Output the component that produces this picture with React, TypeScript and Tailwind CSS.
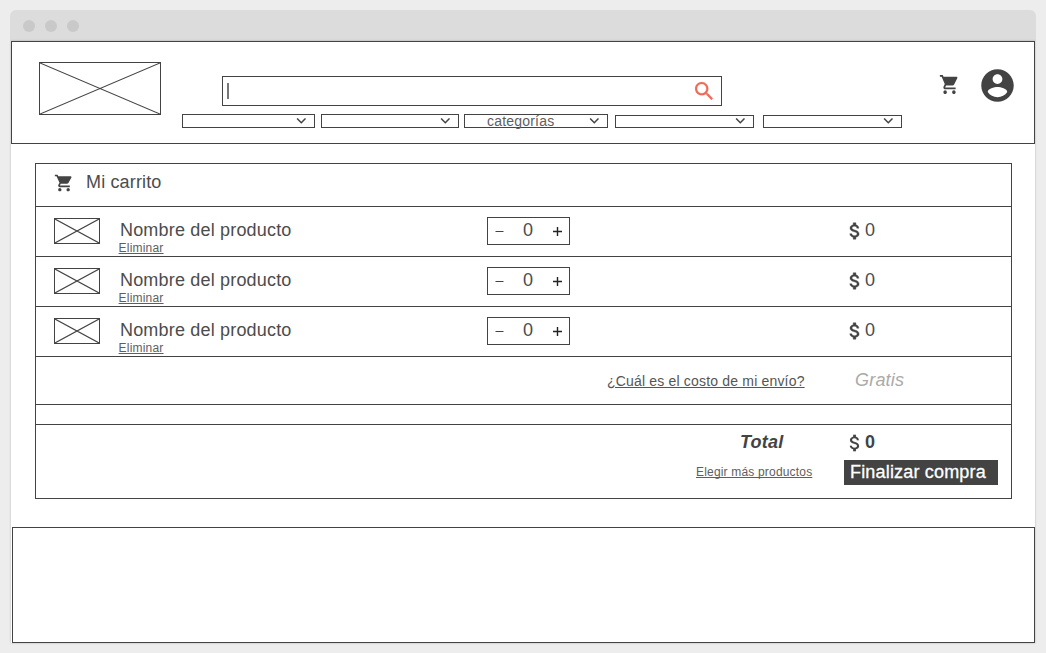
import React from "react";

type SelectProps = { className: string; label?: string };

function Crossed({ className }: { className: string }) {
  return (
    <div className={`shrink-0 border border-[#434343] ${className}`}>
      <svg className="block h-full w-full" viewBox="0 0 100 100" preserveAspectRatio="none">
        <path d="M0 0L100 100M100 0L0 100" stroke="#434343" strokeWidth="1.1" fill="none" vectorEffect="non-scaling-stroke" />
      </svg>
    </div>
  );
}

function Cart({ className }: { className: string }) {
  return (
    <svg className={`shrink-0 ${className}`} viewBox="0 0 24 24" preserveAspectRatio="none" fill="#434343">
      <path d="M7 18c-1.100 0-1.990.9-1.990 2S5.900 22 7 22s2-.9 2-2-.9-2-2-2zM1 2v2h2l3.600 7.590-1.350 2.450c-.16.28-.25.61-.25.96 0 1.100.9 2 2 2h12v-2H7.420c-.14 0-.25-.11-.25-.25l.03-.12.9-1.630h7.450c.75 0 1.410-.41 1.750-1.030l3.580-6.490c.08-.14.12-.31.12-.48 0-.55-.45-1-1-1H5.210l-.94-2H1zm16 16c-1.100 0-1.990.9-1.990 2s.89 2 1.990 2 2-.9 2-2-.9-2-2-2z" />
    </svg>
  );
}

function Dollar({ className, bold }: { className: string; bold?: boolean }) {
  return (
    <svg className={`h-[22px] w-[22px] shrink-0 ${className}`} viewBox="0 0 24 24" fill="#434343" stroke="#434343" strokeWidth={bold ? 0.4 : 0.1}>
      <path d="M11.800 10.900c-2.270-.59-3-1.200-3-2.150 0-1.090 1.010-1.850 2.700-1.850 1.780 0 2.440.85 2.500 2.100h2.210c-.07-1.720-1.120-3.300-3.210-3.810V3h-3v2.160c-1.940.42-3.500 1.680-3.500 3.610 0 2.310 1.910 3.460 4.700 4.130 2.500.6 3 1.480 3 2.410 0 .69-.49 1.790-2.700 1.790-2.060 0-2.870-.92-2.980-2.100h-2.200c.12 2.190 1.760 3.420 3.680 3.830V21h3v-2.150c1.950-.37 3.500-1.500 3.500-3.550 0-2.840-2.430-3.810-4.700-4.400z" />
    </svg>
  );
}

function Select({ className, label }: SelectProps) {
  return (
    <div className={`flex shrink-0 items-start border border-[#434343] bg-white ${className}`}>
      {label && <span className="ml-[22px] mt-[-5px] text-[14px] leading-4 tracking-[0.2px] text-[#5e5e5e]">{label}</span>}
      <svg className="ml-auto h-[6px] w-[10px] shrink-0" viewBox="0 0 10 6" fill="none" stroke="#434343" strokeWidth="1.500">
        <path d="M1.100 0.500L5.300 4.700L9.500 0.500" />
      </svg>
    </div>
  );
}

function ProductRow() {
  return (
    <div className="flex h-[50px] items-start border-b border-[#434343]">
      <Crossed className="ml-[18px] mt-[11px] h-[26px] w-[46px]" />
      <div className="ml-[18px] flex w-[369px] flex-col items-start">
        <span className="ml-[2px] mt-[13px] text-[18px] leading-5 tracking-[0.18px]">Nombre del producto</span>
        <a className="ml-[0.6px] mt-[1px] text-[12px] leading-[14px] tracking-[0.2px] text-[#5e5e5e] underline">Eliminar</a>
      </div>
      <div className="mt-[10px] flex h-[28px] w-[83px] shrink-0 items-center border border-[#434343] pl-[7px]">
        <svg className="h-[9px] w-[9px]" viewBox="0 0 9 9">
          <path d="M0.500 4.500H8.500" stroke="#434343" />
        </svg>
        <span className="mb-[2px] ml-[19px] text-[18px] leading-5">0</span>
        <svg className="ml-[19.500px] h-[9px] w-[9px]" viewBox="0 0 9 9">
          <path d="M0 4.500H9M4.500 0V9" stroke="#222" strokeWidth="1.400" />
        </svg>
      </div>
      <Dollar bold className="ml-[274px] mt-[13px]" />
      <span className="ml-[-1px] mt-[13px] text-[18px] leading-5">0</span>
    </div>
  );
}

export default function App() {
  return (
    <div className="h-[653px] w-[1046px] overflow-hidden bg-[#ededed] px-[10px] pt-[10px] font-['Liberation_Sans',Arial,sans-serif] text-[#4c4c4c]">
      <div className="flex h-[31px] items-center gap-[10px] rounded-t-[6px] bg-[#dcdcdc] pl-[13px]">
        <i className="h-3 w-3 rounded-full bg-[#c9c9c9]" />
        <i className="h-3 w-3 rounded-full bg-[#c9c9c9]" />
        <i className="h-3 w-3 rounded-full bg-[#c9c9c9]" />
      </div>
      <main className="mx-[1px] h-[602px] bg-white shadow-[0_0_2px_rgba(0,0,0,0.25)]">
        <header className="flex h-[103px] items-start border border-[#434343]">
          <Crossed className="ml-[27px] mt-[20px] h-[53px] w-[122px]" />
          <div className="ml-[21px] mt-[34px] w-[720px]">
            <div className="ml-[40px] flex h-[30px] w-[500px] items-start border border-[#434343]">
              <i className="ml-[4px] mt-[6px] h-4 w-[2px] bg-[#777]" />
              <svg className="ml-auto mr-[5px] mt-[2px] h-[24.500px] w-[24.500px]" viewBox="0 0 24 24" fill="#ee6a55" stroke="#ee6a55" strokeWidth="0.2">
                <path d="M15.500 14h-.79l-.28-.27C15.410 12.590 16 11.110 16 9.500 16 5.910 13.090 3 9.500 3S3 5.910 3 9.500 5.910 16 9.500 16c1.610 0 3.090-.59 4.230-1.570l.27.28v.79l5 4.990L20.490 19l-4.990-5zm-6 0C7.010 14 5 11.990 5 9.500S7.010 5 9.500 5 14 7.010 14 9.500 11.990 14 9.500 14z" />
              </svg>
            </div>
            <div className="mt-[8px] flex items-end">
              <Select className="h-[14px] w-[133px] pr-[8px] pt-[3px]" />
              <Select className="ml-[6px] h-[14px] w-[138px] pr-[8px] pt-[3px]" />
              <Select className="ml-[5px] h-[14px] w-[144px] pr-[8px] pt-[3px]" label="categorías" />
              <Select className="ml-[7px] h-[13px] w-[139px] pr-[8px] pt-[2px]" />
              <Select className="ml-[9px] h-[13px] w-[139px] pr-[8px] pt-[2px]" />
            </div>
          </div>
          <Cart className="ml-[37px] mt-[31px] h-[23px] w-[21px]" />
          <svg className="ml-[18px] mt-[24px] h-[39px] w-[39px] shrink-0" viewBox="0 0 24 24" fill="#434343">
            <path d="M12 2C6.480 2 2 6.480 2 12s4.480 10 10 10 10-4.480 10-10S17.520 2 12 2zm0 3c1.660 0 3 1.340 3 3s-1.340 3-3 3-3-1.340-3-3 1.340-3 3-3zm0 14.200c-2.500 0-4.710-1.280-6-3.220.03-1.990 4-3.080 6-3.080 1.990 0 5.970 1.090 6 3.080-1.290 1.940-3.500 3.220-6 3.220z" />
          </svg>
        </header>

        <section className="ml-[24px] mt-[19px] h-[336px] w-[977px] border border-[#434343]">
          <div className="flex h-[43px] items-start border-b border-[#434343]">
            <Cart className="ml-[18px] mt-[9px] h-[20px] w-[20px]" />
            <h1 className="ml-[12px] mt-[8px] text-[18px] leading-5 tracking-[0.15px]">Mi carrito</h1>
          </div>
          <ProductRow />
          <ProductRow />
          <ProductRow />
          <div className="flex h-[48px] items-start border-b border-[#434343]">
            <a className="ml-[571px] mt-[16px] w-[248px] text-[14px] leading-4 tracking-[0.18px] text-[#555] underline">¿Cuál es el costo de mi envío?</a>
            <em className="mt-[13px] text-[18px] leading-5 tracking-[0.2px] text-[#aaa]">Gratis</em>
          </div>
          <div className="h-[20px] border-b border-[#434343]" />
          <div className="flex h-[73px]">
            <div className="ml-[660px] w-[148px]">
              <strong className="ml-[44px] mt-[7px] block text-[18px] italic leading-5 tracking-[0.2px] text-[#434343]">Total</strong>
              <a className="mt-[13px] block text-[12px] leading-[14px] tracking-[0.18px] text-[#5e5e5e] underline [text-decoration-skip-ink:none]">Elegir más productos</a>
            </div>
            <div>
              <div className="flex h-[35px] items-start">
                <Dollar className="mt-[7px]" />
                <strong className="ml-[-1px] mt-[7px] text-[18px] leading-5 text-[#434343]">0</strong>
              </div>
              <button className="block h-[25px] w-[154px] bg-[#434343] pb-[1px] pl-[6px] text-left text-[18px] leading-[24px] tracking-[0.18px] text-white [-webkit-text-stroke:0.3px_white]">Finalizar compra</button>
            </div>
          </div>
        </section>

        <footer className="ml-[1px] mt-[28px] h-[116px] border border-[#434343]" />
      </main>
    </div>
  );
}
